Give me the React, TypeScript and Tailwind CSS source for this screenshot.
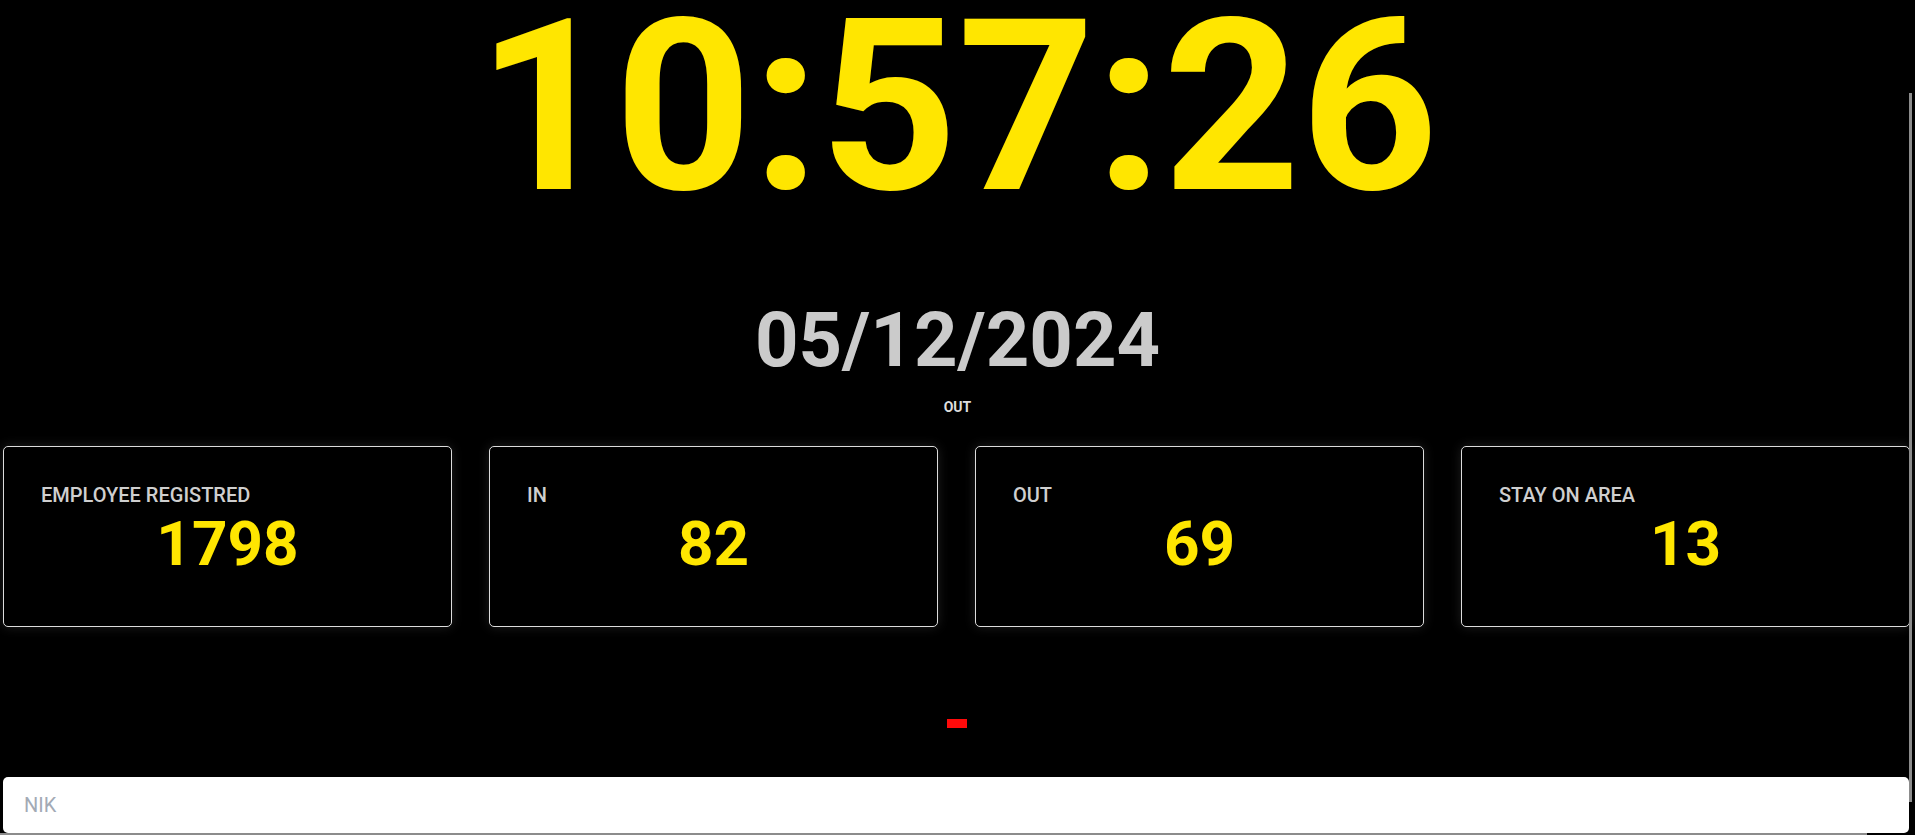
import React from "react";

const stats = [
  { label: "EMPLOYEE REGISTRED", value: 1798 },
  { label: "IN", value: 82 },
  { label: "OUT", value: 69 },
  { label: "STAY ON AREA", value: 13 },
];

const StatCard: React.FC<{ label: string; value: number }> = ({ label, value }) => (
  <div className="h-[181px] rounded-[5px] border border-[#dcdcdc] bg-black pt-[34px] shadow-[0_0_12px_rgba(255,255,255,0.12)]">
    <div className="pl-[37px] text-[20px] font-medium leading-[28px] text-[#cfcfcf]">
      {label}
    </div>
    <div className="mt-[4px] text-center text-[62px] font-bold leading-none text-[#ffe600]">
      {value}
    </div>
  </div>
);

const App: React.FC = () => {
  return (
    <div className="relative h-[835px] w-full overflow-hidden bg-black font-['Roboto','Liberation_Sans',sans-serif]">
      {/* Clock */}
      <div className="h-[212px] pt-[2px] text-center text-[240px] font-bold leading-[210px] text-[#ffe600]">
        10:57:26
      </div>

      {/* Date */}
      <div className="mt-[90px] text-center text-[76px] font-bold leading-none text-[#cbcbcb]">
        05/12/2024
      </div>

      {/* Mode */}
      <div className="mt-[19px] text-center text-[14px] font-bold leading-5 text-[#dddddd]">
        OUT
      </div>

      {/* Stats */}
      <div className="mt-[29px] grid grid-cols-4 gap-[37px] pl-[3px] pr-[5px]">
        {stats.map((s) => (
          <StatCard key={s.label} label={s.label} value={s.value} />
        ))}
      </div>

      {/* Status */}
      <div className="mt-[92px] flex justify-center">
        <div className="ml-[-1px] h-[9px] w-[20px] bg-[#ff0a0a]" />
      </div>

      {/* Input */}
      <div className="mt-[49px] pl-[3px] pr-[6px]">
        <input
          type="text"
          placeholder="NIK"
          className="h-[56px] w-full rounded-[5px] bg-white pl-[21px] text-[20px] text-gray-800 outline-none placeholder:text-[#a3aab5]"
        />
      </div>

      {/* Overlay scrollbars */}
      <div className="absolute right-[3px] top-[93px] h-[709px] w-[3px] bg-[#8c8c8c]" />
      <div className="absolute bottom-0 left-0 h-[2px] w-[1867px] bg-[#8c8c8c]" />
    </div>
  );
};

export default App;
